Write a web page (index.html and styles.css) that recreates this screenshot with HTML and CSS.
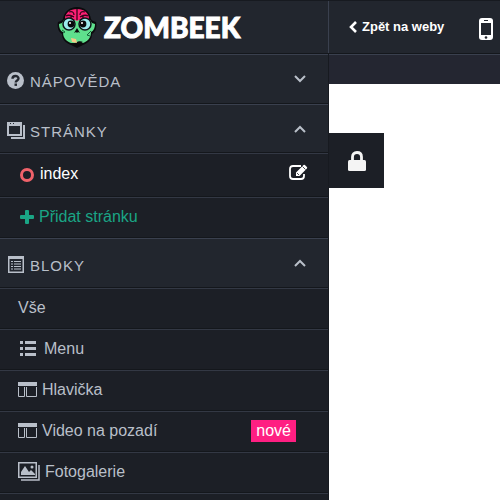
FILE: index.html
```html
<!doctype html>
<html lang="cs">
<head>
    <meta charset="UTF-8">
    <meta name="viewport" content="width=device-width, initial-scale=1">
    <title>Zombeek</title>
    <link rel="stylesheet" href="styles.css">
</head>
<body>
<header class="topbar">
    <a href="#" class="logo">
        <svg class="logo-head" width="40" height="42" viewBox="0 0 40 42" aria-hidden="true">
            <path fill="#0b0b0d" d="M20 1C12 1 7 6 6 13 5 15 3 15 1 16c-1 4 0 10 4 12 0 6 4 9 9 11l6 3 6-3c5-2 9-5 9-11 4-2 5-8 4-12-2-1-4-1-5-3C33 6 28 1 20 1z"/>
            <path fill="#5fe08d" d="M7 14h26l2 3 3 1c0 3-1 7-4 8 0 6-3 9-8 11H14c-5-2-8-5-8-11-3-1-4-5-4-8l3-1z"/>
            <path fill="#ff1f75" d="M8 13c0-6 5-10 12-10s12 4 12 10l-6-1-6 3-6-3z"/>
            <path fill="none" stroke="#35051b" stroke-width="1.3" d="M20 3v11M12 6c3-1 5 0 5 3M9 10c3-2 6 0 8 1M28 6c-3-1-5 0-5 3M31 10c-3-2-6 0-8 1M14 12V9M26 12V9"/>
            <circle cx="12" cy="18" r="6" fill="#9cebed" stroke="#101519" stroke-width="1.5"/>
            <circle cx="28" cy="18" r="6" fill="#9cebed" stroke="#101519" stroke-width="1.5"/>
            <circle cx="14" cy="18" r="3.4" fill="#08090b"/>
            <circle cx="26" cy="18" r="3.4" fill="#08090b"/>
            <circle cx="13" cy="17" r="1" fill="#fff"/>
            <circle cx="25" cy="17" r="1" fill="#fff"/>
            <path fill="#0b0b0d" d="M20 22l3 5-2-1-1 1-1-1-2 1zM18 37c3-2 6-2 8-1l-6 4z"/>
            <path fill="none" stroke="#17613a" d="M5 24l3 2-2 1M34 25l-4 4 3 1"/>
            <path fill="#f5c987" d="M14 32l5 1 1 4-5-1z"/>
        </svg>
        <span>ZOMBEEK</span>
    </a>
    <nav class="tools">
        <a href="#" class="back">
            <svg width="8" height="12" viewBox="0 0 8 12" aria-hidden="true"><path fill="none" stroke="#fff" stroke-width="2.6" d="M7 1L2 6l5 5"/></svg>
            Zpět na weby
        </a>
        <button type="button" class="device" aria-label="Mobil">
            <svg width="14" height="22" viewBox="0 0 14 22" aria-hidden="true">
                <rect width="14" height="22" rx="3" fill="#fff"/>
                <path fill="#22262e" d="M2 5h10v12H2zM5 2h4v1H5z"/>
                <circle cx="7" cy="19.5" r="1.3" fill="#22262e"/>
            </svg>
        </button>
    </nav>
</header>
<div class="layout">
    <aside class="sidebar">
        <button type="button" class="section">
            <svg width="18" height="18" viewBox="0 0 18 18" aria-hidden="true">
                <circle cx="8.5" cy="8.5" r="8.5" fill="#b9bfc9"/>
                <path fill="none" stroke="#22262e" stroke-width="2.4" d="M5.500 6.700C5.500 3.100 11.500 3.100 11.500 6.500c0 2-2.800 2-2.800 4"/>
                <path fill="#22262e" d="M7.500 11.500h2.500v2.400H7.500z"/>
            </svg>
            <span>NÁPOVĚDA</span>
            <svg class="chevron" width="12" height="8" viewBox="0 0 12 8" aria-hidden="true"><path d="M1 1l5 5 5-5"/></svg>
        </button>
        <button type="button" class="section">
            <svg width="18" height="18" viewBox="0 0 18 18" aria-hidden="true">
                <path fill="#b9bfc9" fill-rule="evenodd" d="M0 0h15v14H0zM2 4v8h11V4zM3 1v1h1V1zM6 1v1h1V1z"/>
                <path fill="#b9bfc9" d="M16 3h2v14H4v-2h12z"/>
            </svg>
            <span>STRÁNKY</span>
            <svg class="chevron" width="12" height="8" viewBox="0 0 12 8" aria-hidden="true"><path d="M1 7l5-5 5 5"/></svg>
        </button>
        <div class="item page">
            <a href="#" class="page-link">
                <span class="ring"></span>
                index
            </a>
            <button type="button" class="edit" aria-label="Upravit">
                <svg width="19" height="16" viewBox="0 0 19 16" aria-hidden="true">
                    <path fill="none" stroke="#fff" stroke-width="1.8" d="M12 2H4Q1 2 1 5v7q0 3 3 3h8q3 0 3-3v-2"/>
                    <path fill="#fff" d="M7 12V8.500L14.500 1q.7-.7 1.400 0l2 2q.7.7 0 1.400L10.500 12z"/>
                    <path stroke="#1c1f26" stroke-width=".8" d="M13.500 2.500l3 3M8 9l2 2"/>
                </svg>
            </button>
        </div>
        <a href="#" class="item add">
            <svg width="14" height="14" viewBox="0 0 14 14" aria-hidden="true"><path fill="#1aa585" d="M5 1q0-1 1-1h2q1 0 1 1v4h4q1 0 1 1v2q0 1-1 1H9v4q0 1-1 1H6q-1 0-1-1V9H1Q0 9 0 8V6q0-1 1-1h4z"/></svg>
            Přidat stránku
        </a>
        <button type="button" class="section">
            <svg width="18" height="18" viewBox="0 0 18 18" aria-hidden="true">
                <path fill="#b9bfc9" fill-rule="evenodd" d="M1 0h16v17H1zM2.500 3v12.500h13V3z"/>
                <path fill="#b9bfc9" d="M4 5h2v1H4zM7 5h7v1H7zM4 7.500h2v1H4zM7 7.500h7v1H7zM4 10h2v1H4zM7 10h7v1H7zM4 12.500h2v1H4zM7 12.500h7v1H7z"/>
            </svg>
            <span>BLOKY</span>
            <svg class="chevron" width="12" height="8" viewBox="0 0 12 8" aria-hidden="true"><path d="M1 7l5-5 5 5"/></svg>
        </button>
        <a href="#" class="item">Vše</a>
        <a href="#" class="item wide">
            <svg width="16" height="16" viewBox="0 0 16 16" aria-hidden="true"><path fill="#b9bfc9" d="M0 0h3v3H0zM5 0h11v3H5zM0 6h3v3H0zM5 6h11v3H5zM0 12h3v3H0zM5 12h11v3H5z"/></svg>
            Menu
        </a>
        <a href="#" class="item">
            <svg width="19" height="16" viewBox="0 0 19 16" aria-hidden="true">
                <path fill="#b9bfc9" d="M0 0h19v4H0z"/>
                <path fill="none" stroke="#b9bfc9" d="M.5 5v9.500h6V5M8.500 5v9.500h10V5"/>
            </svg>
            Hlavička
        </a>
        <a href="#" class="item">
            <svg width="19" height="16" viewBox="0 0 19 16" aria-hidden="true">
                <path fill="#b9bfc9" d="M0 0h19v4H0z"/>
                <path fill="none" stroke="#b9bfc9" d="M.5 5v9.500h6V5M8.500 5v9.500h10V5"/>
            </svg>
            Video na pozadí
            <span class="label">nové</span>
        </a>
        <a href="#" class="item">
            <svg width="22" height="19" viewBox="0 0 22 19" aria-hidden="true">
                <path fill="#b9bfc9" fill-rule="evenodd" d="M0 0h19v16H0zM1.500 1.500v13h16v-13z"/>
                <path fill="#b9bfc9" d="M3 13V10l4-6 4 6 2-2 4 4v1z"/>
                <circle cx="14" cy="5" r="1.5" fill="#b9bfc9"/>
                <path fill="none" stroke="#b9bfc9" stroke-width="1.5" d="M21 3v15H3"/>
            </svg>
            Fotogalerie
        </a>
        <div class="rest"></div>
    </aside>
    <main class="content">
        <div class="canvas">
            <button type="button" class="lock" aria-label="Zamknout">
                <svg width="18" height="20" viewBox="0 0 18 20" aria-hidden="true">
                    <path fill="none" stroke="#f4f4f4" stroke-width="2.8" d="M4.500 10V6q0-4.500 4.500-4.500T13.500 6v4"/>
                    <rect y="9" width="18" height="11" rx="1.5" fill="#f4f4f4"/>
                </svg>
            </button>
        </div>
    </main>
</div>
</body>
</html>
```
FILE: styles.css
```css
* {margin: 0; padding: 0; box-sizing: border-box;}
body {display: flex; flex-direction: column; height: 100vh; overflow: hidden; background: #22262e; color: #b9bfc9; font-family: "Liberation Sans", Arial, sans-serif; font-size: 16px; line-height: 20px;}
a {color: inherit; text-decoration: none;}
button {border: 0; background: none; color: inherit; font: inherit; cursor: pointer;}
svg {display: block; flex: none;}

/* top bar */
.topbar {display: flex; flex: none; height: 54px; border-top: 1px solid #171a20; border-bottom: 1px solid #14171c;}
.logo {display: flex; align-items: center; gap: 7px; width: 329px; padding-left: 57px; border-right: 1px solid #3a404e; color: #fff; font-family: Lato, sans-serif; font-size: 28px; font-weight: 900; line-height: 32px; -webkit-text-stroke: 1px #fff;}
.tools {display: flex; flex: 1; align-items: center; justify-content: space-between; padding: 0 7px 0 20px;}
.back {display: flex; align-items: center; gap: 5px; color: #fff; font-size: 13px; font-weight: bold; white-space: nowrap;}
.device {padding-top: 4px;}

/* left menu */
.layout {display: flex; flex: 1; min-height: 0;}
.sidebar {display: flex; flex: none; flex-direction: column; width: 329px; overflow: hidden; background: #1c1f26; border-right: 1px solid #171a20;}
.section {display: flex; flex: none; align-items: center; gap: 5px; height: 50px; padding: 4px 22px 0 7px; background: #22262e; border-top: 1px solid #3a404e; border-bottom: 1px solid #14171c; font-size: 15px; letter-spacing: 1px; text-align: left;}
.section span {padding-top: 2px;}
.section + .section {height: 49px;}
.chevron {margin: 0 0 4px auto; fill: none; stroke: #b9bfc9; stroke-width: 2;}
.item {display: flex; flex: none; align-items: center; gap: 5px; height: 41px; padding: 0 32px 2px 18px; border-top: 1px solid #333844; border-bottom: 1px solid #14171c;}
.wide {gap: 8px; padding-left: 20px;}
.page {justify-content: space-between; height: 44px; padding: 0 20px 2px; color: #fff;}
.page-link {display: flex; align-items: center; gap: 6px;}
.ring {width: 14px; height: 14px; margin-top: 2px; border: 3px solid #f0626a; border-radius: 50%;}
.edit {padding-bottom: 4px;}
.add {padding-left: 20px; color: #1aa585;}
.label {margin-left: auto; padding: 1px 5px; background: #ff1f82; color: #fff;}
.rest {flex: 1; border-top: 1px solid #333844;}

/* edited page */
.content {display: flex; flex: 1; flex-direction: column; padding-top: 29px; background: #242631; border-top: 1px solid #3a404e;}
.canvas {flex: 1; padding-top: 49px; background: #fff;}
.lock {display: grid; place-items: center; width: 55px; height: 55px; background: #1c1f26;}
```
